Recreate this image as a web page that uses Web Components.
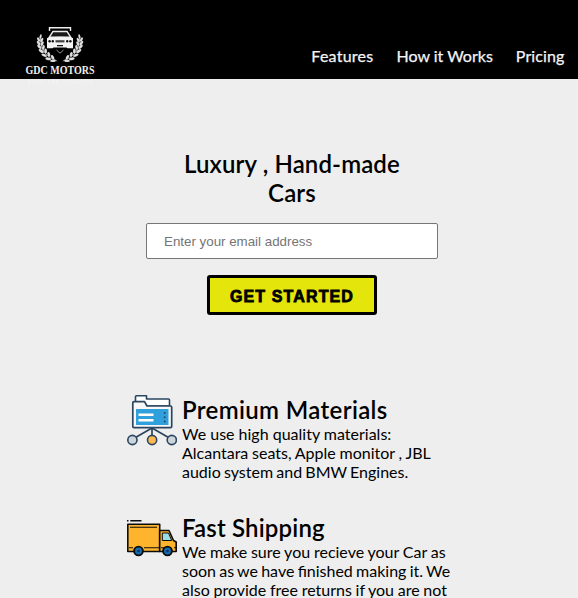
<!DOCTYPE html>
<html lang="en">
<head>
<meta charset="utf-8">
<title>GDC Motors</title>
<style>
html,body{margin:0;height:598px;overflow:hidden}
body{background:#eee;color:#000;font:16px/19px Lato,sans-serif}
</style>
</head>
<body>
<gdc-page></gdc-page>
<script>
const define=(name,html)=>{
  const t=document.createElement('template');
  t.innerHTML=html;
  customElements.define(name,class extends HTMLElement{
    constructor(){super();this.attachShadow({mode:'open'}).append(t.content.cloneNode(true));}
  });
};

const sprig=`<path d="M-19-7Q-19 12-2 17" fill="none" stroke="#aaa" stroke-width=".8"/>
<g fill="#dedede">
<ellipse cx="-18.6" cy="-7.5" rx="1" ry="2.3" transform="rotate(12 -18.6 -7.5)"/>
<ellipse cx="-20.6" cy="-4.5" rx="1.2" ry="2.4" transform="rotate(-28 -20.6 -4.5)"/>
<ellipse cx="-17.4" cy="-4" rx="1.2" ry="2.4" transform="rotate(28 -17.4 -4)"/>
<ellipse cx="-20.6" cy="-1" rx="1.3" ry="2.6" transform="rotate(-36 -20.6 -1)"/>
<ellipse cx="-17" cy="-.4" rx="1.3" ry="2.5" transform="rotate(22 -17 -.4)"/>
<ellipse cx="-19.8" cy="2.8" rx="1.3" ry="2.8" transform="rotate(-46 -19.8 2.8)"/>
<ellipse cx="-15.8" cy="3.4" rx="1.3" ry="2.5" transform="rotate(12 -15.8 3.4)"/>
<ellipse cx="-18" cy="7" rx="1.4" ry="2.9" transform="rotate(-58 -18 7)"/>
<ellipse cx="-13.6" cy="7" rx="1.4" ry="2.5" transform="rotate(-2 -13.6 7)"/>
<ellipse cx="-15" cy="11.2" rx="1.4" ry="2.9" transform="rotate(-68 -15 11.2)"/>
<ellipse cx="-10.4" cy="10.4" rx="1.4" ry="2.5" transform="rotate(-18 -10.4 10.4)"/>
<ellipse cx="-11" cy="14.8" rx="1.4" ry="2.9" transform="rotate(-80 -11 14.8)"/>
<ellipse cx="-6.6" cy="13.2" rx="1.3" ry="2.4" transform="rotate(-34 -6.6 13.2)"/>
<ellipse cx="-6.2" cy="16.8" rx="1.2" ry="2.9" transform="rotate(-92 -6.2 16.8)"/>
</g>`;

define('gdc-logo',`<style>:host{display:block;width:90px;height:70px}svg{display:block}</style>
<svg width="90" height="70" viewBox="0 0 90 70">
<g transform="translate(45 29)"><g transform="translate(-.8 0)">${sprig}</g><g transform="translate(.8 0) scale(-1 1)">${sprig}</g></g>
<path d="M34.5 16V12.7H55.5V16" fill="none" stroke="#eee" stroke-width="1.4"/>
<path d="M37.5 15.8H52.5L57 23H33Z" fill="#eee"/>
<path d="M38.3 17.3H51.7L54.5 21.5H35.5Z" fill="#1a1a1a"/>
<path d="M32 23Q45 20.5 58 23V33.3H52.5L51.5 32.5H38.5L37.5 33.3H32Z" fill="#f4f4f4"/>
<path d="M40.5 25.2H49.5V27.4H40.5Z" fill="#444"/>
<g fill="#111"><circle cx="34.6" cy="26.3" r="1.2"/><circle cx="37.8" cy="26.3" r="1.2"/><circle cx="52.2" cy="26.3" r="1.2"/><circle cx="55.4" cy="26.3" r="1.2"/><path d="M42 30H48V31.3H42Z"/></g>
<path d="M41.5 35L45 38.2L48.5 35" fill="none" stroke="#999" stroke-width="1"/>
<text x="10.5" y="58.8" textLength="69" lengthAdjust="spacingAndGlyphs" font-family="Liberation Serif,serif" font-weight="700" font-size="11.5" fill="#eee">GDC MOTORS</text>
<text x="13" y="68.5" textLength="65" font-family="Liberation Serif,serif" font-size="6" fill="#f5f5f5" style="clip-path:inset(0)">FEEL THE QUALITY</text>
</svg>`);

define('gdc-header',`<style>
:host{display:flex;box-sizing:border-box;height:79px;background:linear-gradient(#000,#000);padding:15px 13.5px 0 15px;justify-content:space-between}
nav{display:flex;gap:23px;padding-top:31px;color:#f4f4f4;-webkit-text-stroke:.25px #f4f4f4}
span:first-child{letter-spacing:.25px}
span:last-child{letter-spacing:.12px}
</style><gdc-logo></gdc-logo><nav><span>Features</span><span>How it Works</span><span>Pricing</span></nav>`);

define('gdc-signup',`<style>
:host{display:flex;flex-direction:column;align-items:center;width:292px;margin:70px 0 0 146px}
h2{margin:0;width:250px;text-align:center;font-size:24px;line-height:29px;font-weight:600;letter-spacing:.12px}
input{box-sizing:border-box;width:292px;height:36px;margin:16px 0 16px;padding:0 17px;border:1px solid #767676;border-radius:2px;background:#fff;font:13.333px "Liberation Sans",sans-serif}
input::placeholder{color:#757575}
button{box-sizing:border-box;width:170px;height:40px;padding:3px 0 0;border:3px solid #000;border-radius:3px;background:#e4e60b;color:#000;font:900 16px "Liberation Sans",sans-serif;letter-spacing:1.12px;-webkit-text-stroke:.8px #000}
</style><h2>Luxury , Hand-made Cars</h2><input placeholder="Enter your email address"><button>GET STARTED</button>`);

define('gdc-feature',`<style>
:host{display:grid;grid-template-columns:50px 275px;column-gap:5px;margin-left:127px}
div{margin:-1px 0 1px}
h2{margin:0;font-size:24px;line-height:29px;font-weight:600;letter-spacing:var(--title-spacing,0)}
p{margin:0;font-size:16px;line-height:19px;white-space:nowrap}
</style><slot name="icon"></slot><div><h2><slot name="title"></slot></h2><p><slot></slot></p></div>`);

define('icon-folder',`<style>:host{display:block}svg{display:block;margin-top:-2px}</style>
<svg width="50" height="52" viewBox="0 0 50 52" stroke-linejoin="round">
<path d="M25 34L8.5 43.5M25 34V42M25 34L41.5 43.5" fill="none" stroke="#2b4560" stroke-width="1.7"/>
<path d="M8.5 8V2.8Q8.5 1.8 9.5 1.8H19.5V5H41.5Q42.5 5 42.5 6V12H8.5Z" fill="#fff" stroke="#2b4560" stroke-width="1.6"/>
<path d="M5.8 8.8Q5.8 7.6 7 7.6H17.5L20 12H43.5Q44.7 12 44.7 13.2V32.4Q44.7 33.6 43.5 33.6H7Q5.8 33.6 5.8 32.4Z" fill="#f8f8f8" stroke="#2b4560" stroke-width="1.7"/>
<path d="M9 15H41.5V31H9Z" fill="#2fa0dc"/>
<path d="M11.5 19.5H26.5V22H11.5ZM11.5 25H26.5V27.5H11.5Z" fill="#fff"/>
<g fill="#24496b"><circle cx="37.7" cy="19" r="1"/><circle cx="37.7" cy="23.2" r="1"/><circle cx="37.7" cy="27.4" r="1"/></g>
<g stroke="#2b4560" stroke-width="1.6"><circle cx="5.4" cy="46" r="4.6" fill="#ced5da"/><circle cx="25.1" cy="46" r="4.6" fill="#ffb94e"/><circle cx="44.8" cy="46" r="4.6" fill="#ced5da"/></g>
</svg>`);

define('icon-truck',`<style>:host{display:block}svg{display:block;margin-top:4px}</style>
<svg width="50" height="40" viewBox="0 0 50 40" stroke="#0c0c0c" stroke-width="1.6" stroke-linejoin="round">
<path d="M0 2.8H1.5M3.3 2.8H14.5" fill="none"/>
<path d="M.8 6.3H32.7V33.5H.8Z" fill="#ffb42e"/>
<path d="M32.7 12.5H42L46.5 22.5L49.2 24V33.5H32.7Z" fill="#ffb42e"/>
<path d="M35.3 15H41.5L44.7 22.5H35.3Z" fill="#9cdce5" stroke-width="1"/>
<path d="M3 9.3H30M2 29.8H6M17 29.8H32.5M34 29.8H38M47 29.8H49" fill="none" stroke-width="1.1"/>
<g fill="#176bae" stroke-width="1.9"><circle cx="11.5" cy="33" r="4.4"/><circle cx="40.5" cy="33" r="4.4"/></g>
<g fill="#0b3766" stroke="none"><circle cx="11.5" cy="33" r="1.3"/><circle cx="40.5" cy="33" r="1.3"/></g>
</svg>`);

define('gdc-page',`<style>
:host{display:block;height:598px}
section{display:flex;flex-direction:column;gap:32px;margin-top:81px}
.materials{--title-spacing:.36px}
.shipping{--title-spacing:.17px}
</style>
<gdc-header></gdc-header>
<gdc-signup></gdc-signup>
<section>
<gdc-feature class="materials"><icon-folder slot="icon"></icon-folder><span slot="title">Premium Materials</span><span>We use high quality materials:</span><br><span style="word-spacing:-.35px">Alcantara seats, Apple monitor , JBL</span><br><span style="word-spacing:-.9px">audio system and BMW Engines.</span></gdc-feature>
<gdc-feature class="shipping"><icon-truck slot="icon"></icon-truck><span slot="title">Fast Shipping</span><span style="word-spacing:-.3px">We make sure you recieve your Car as</span><br><span style="word-spacing:-.85px">soon as we have finished making it. We</span><br><span style="word-spacing:-.4px">also provide free returns if you are not</span></gdc-feature>
</section>`);
</script>
</body>
</html>
